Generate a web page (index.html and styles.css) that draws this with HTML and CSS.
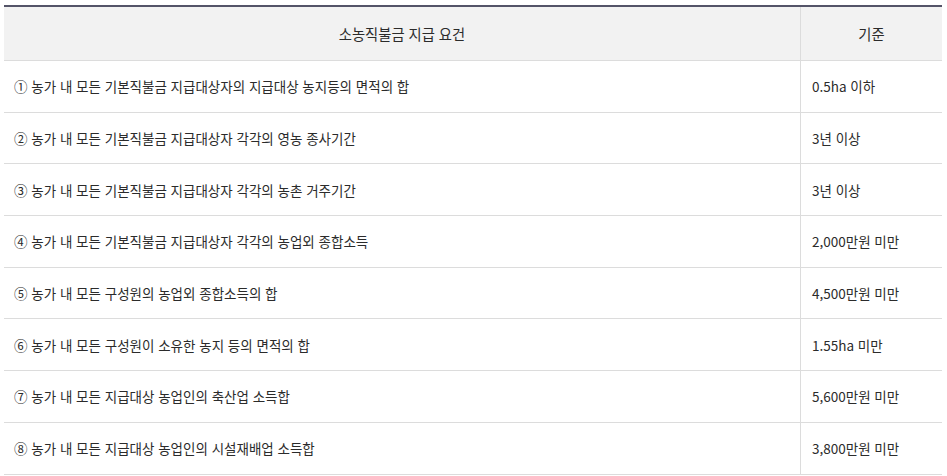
FILE: index.html
```html
<!DOCTYPE html>
<html lang="ko">
<head>
<meta charset="utf-8">
<link rel="stylesheet" href="styles.css">
</head>
<body>
<div class="wrap">
<table class="req">
  <thead>
    <tr><th class="c-req">소농직불금 지급 요건</th><th class="c-val">기준</th></tr>
  </thead>
  <tbody>
    <tr><td>① 농가 내 모든 기본직불금 지급대상자의 지급대상 농지등의 면적의 합</td><td class="val">0.5ha 이하</td></tr>
    <tr><td>② 농가 내 모든 기본직불금 지급대상자 각각의 영농 종사기간</td><td class="val">3년 이상</td></tr>
    <tr><td>③ 농가 내 모든 기본직불금 지급대상자 각각의 농촌 거주기간</td><td class="val">3년 이상</td></tr>
    <tr><td>④ 농가 내 모든 기본직불금 지급대상자 각각의 농업외 종합소득</td><td class="val">2,000만원 미만</td></tr>
    <tr><td>⑤ 농가 내 모든 구성원의 농업외 종합소득의 합</td><td class="val">4,500만원 미만</td></tr>
    <tr><td>⑥ 농가 내 모든 구성원이 소유한 농지 등의 면적의 합</td><td class="val">1.55ha 미만</td></tr>
    <tr><td>⑦ 농가 내 모든 지급대상 농업인의 축산업 소득합</td><td class="val">5,600만원 미만</td></tr>
    <tr><td>⑧ 농가 내 모든 지급대상 농업인의 시설재배업 소득합</td><td class="val">3,800만원 미만</td></tr>
  </tbody>
</table>
</div>
</body>
</html>
```

FILE: styles.css
```css
html, body {
  margin: 0;
  padding: 0;
  background: #fff;
}
.wrap {
  padding: 5px 5px 0 4px;
}
.req {
  width: 938px;
  border-collapse: collapse;
  border-top: 2px solid #545468;
  font-family: "Noto Sans CJK KR", "Noto Sans", sans-serif;
  color: #2b2b2b;
}
.req th {
  background: #f2f2f2;
  font-weight: normal;
  font-size: 14.3px;
  height: 53px;
  padding: 0;
  text-align: center;
  border-bottom: 1px solid #dcdcdc;
}
.req .c-val {
  width: 141px;
  border-left: 1px solid #dcdcdc;
}
.req td {
  font-size: 13.5px;
  height: 50.7px;
  padding: 0 10px;
  border-bottom: 1px solid #dcdcdc;
  text-align: left;
}
.req td.val {
  padding-left: 11px;
  border-left: 1px solid #dcdcdc;
}
```
